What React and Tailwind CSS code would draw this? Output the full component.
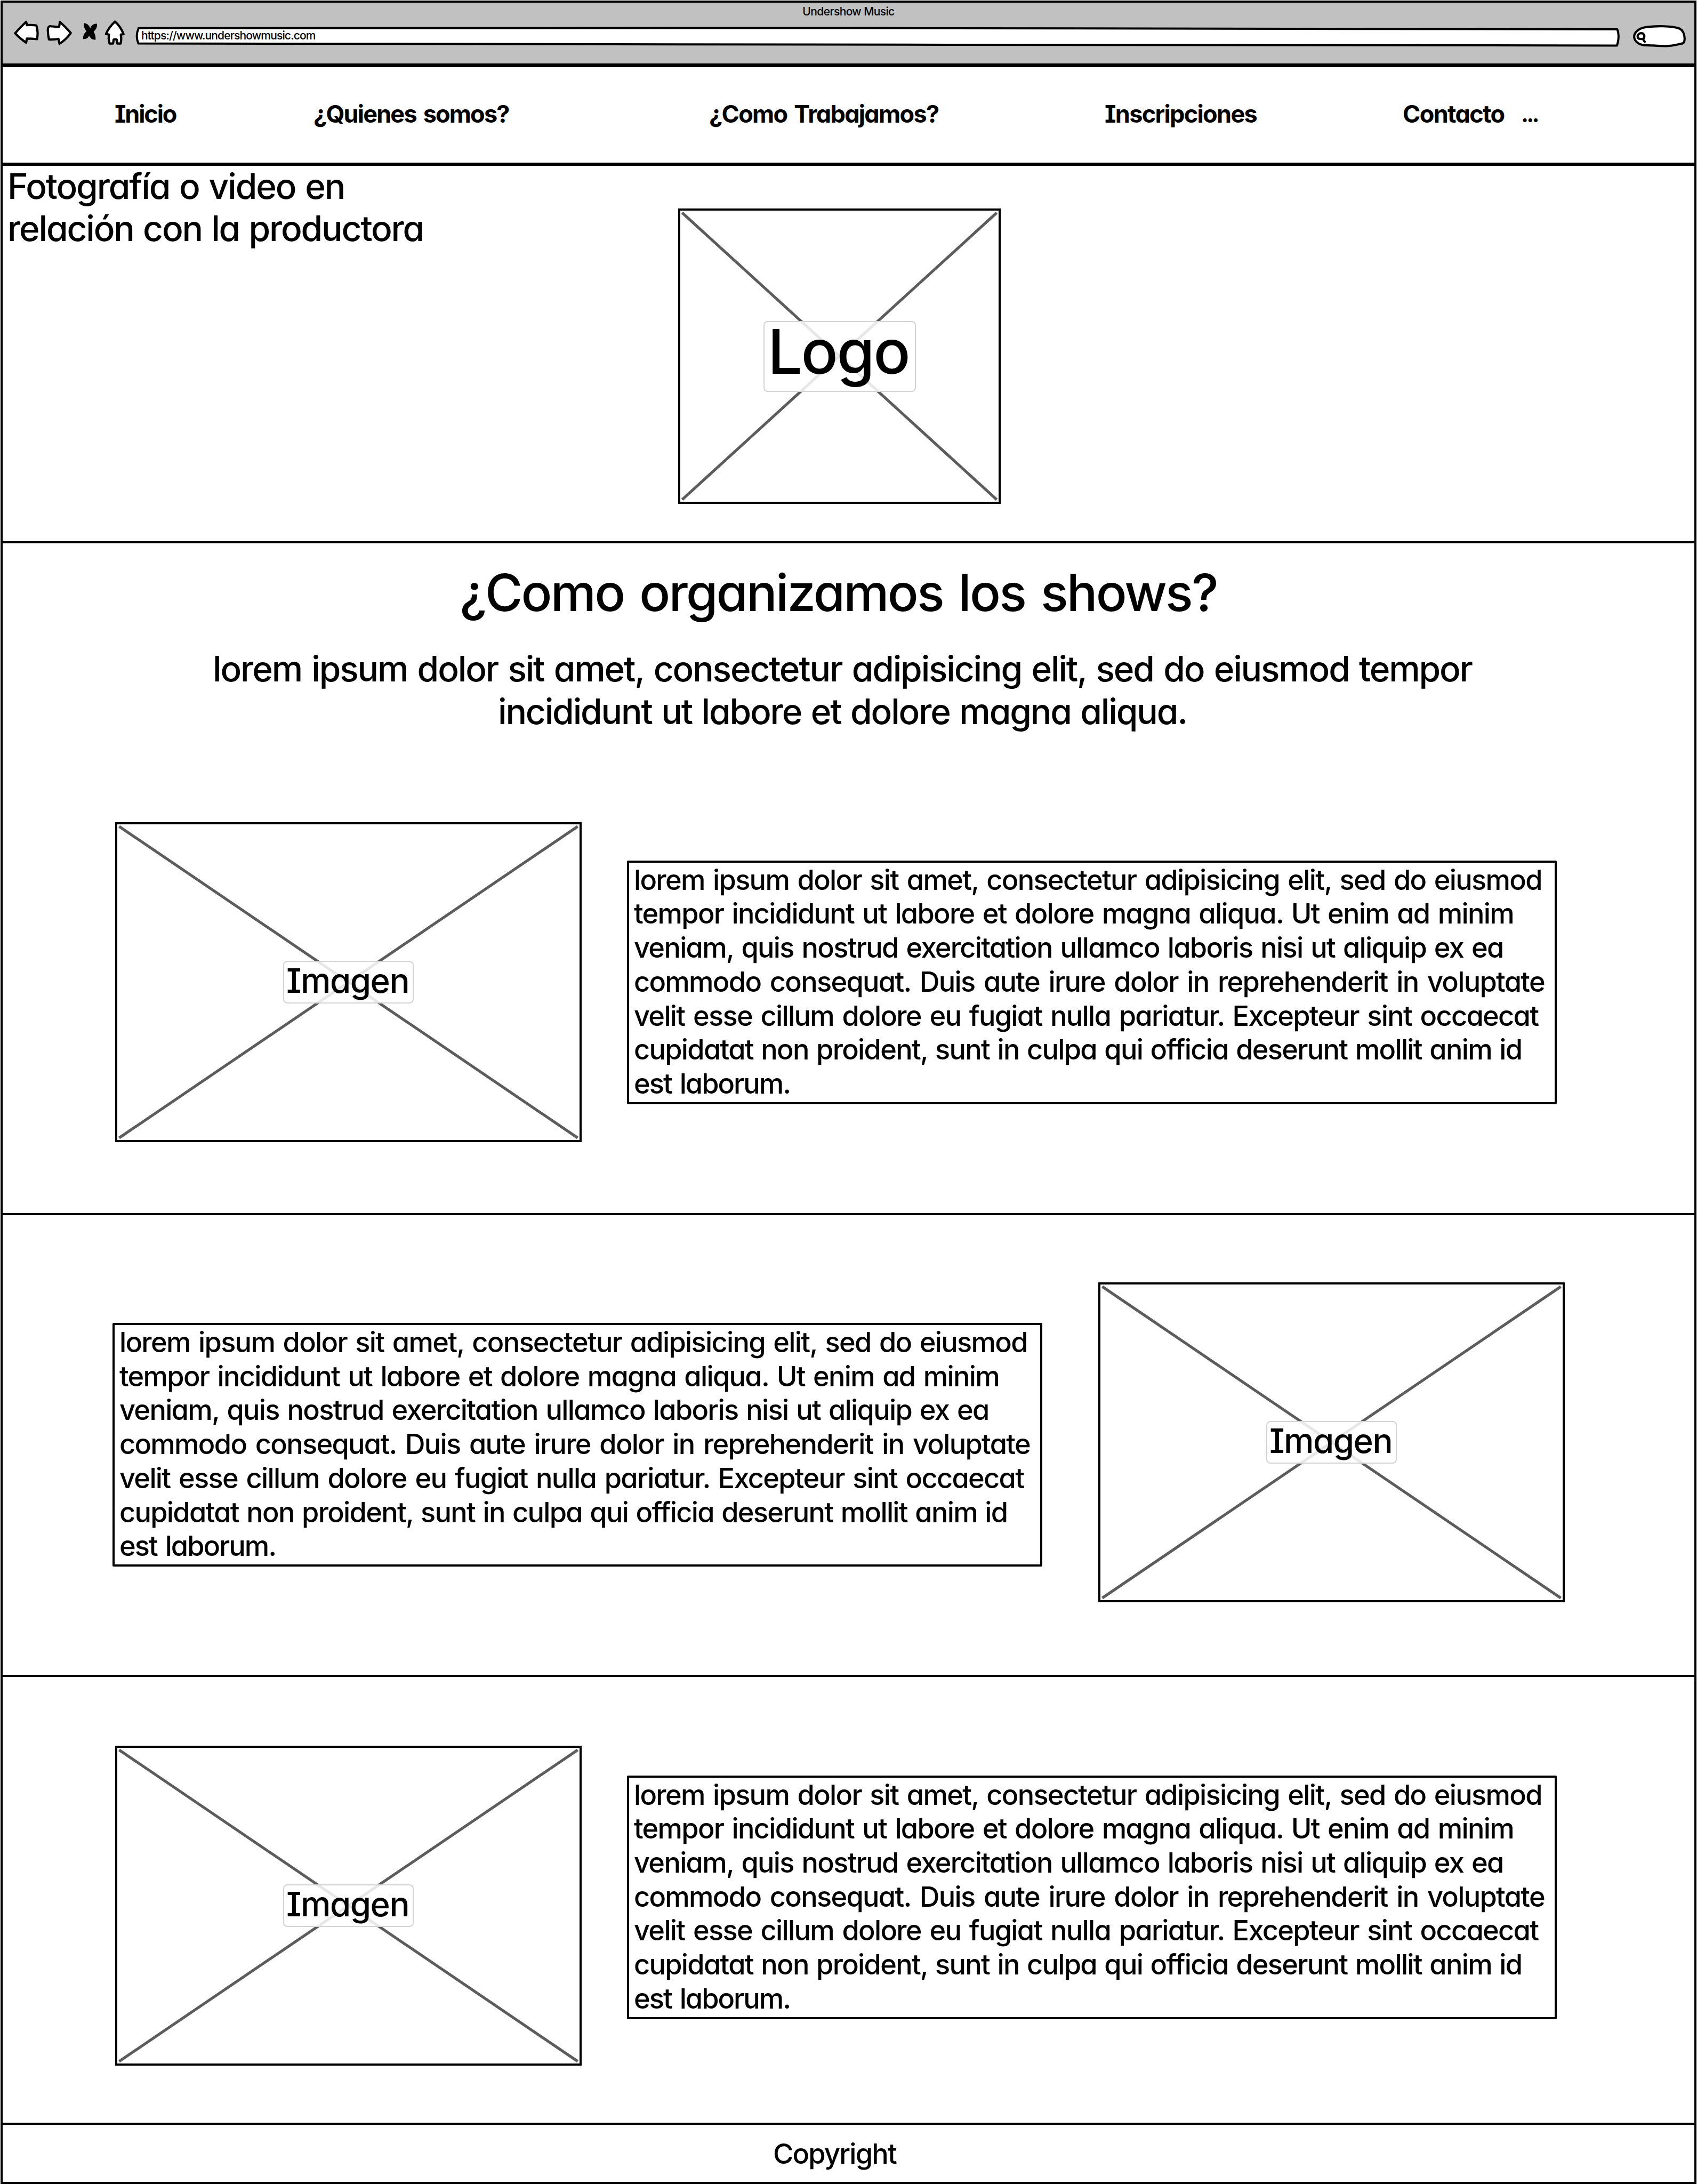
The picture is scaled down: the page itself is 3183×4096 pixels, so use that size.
const LOREM_LINES = [
  { text: 'lorem ipsum dolor sit amet, consectetur adipisicing elit, sed do eiusmod', fit: '[word-spacing:3.15px]' },
  { text: 'tempor incididunt ut labore et dolore magna aliqua. Ut enim ad minim', fit: '[word-spacing:2.95px]' },
  { text: 'veniam, quis nostrud exercitation ullamco laboris nisi ut aliquip ex ea', fit: '[word-spacing:2.57px]' },
  { text: 'commodo consequat. Duis aute irure dolor in reprehenderit in voluptate', fit: '[word-spacing:4.29px]' },
  { text: 'velit esse cillum dolore eu fugiat nulla pariatur. Excepteur sint occaecat', fit: '[word-spacing:3.3px]' },
  { text: 'cupidatat non proident, sunt in culpa qui officia deserunt mollit anim id', fit: '[word-spacing:2.1px]' },
  { text: 'est laborum.', fit: 'tracking-[-2px] [word-spacing:3px]' },
]

const NAV_ITEMS = [
  { text: 'Inicio', fit: 'tracking-[-2.1px]' },
  { text: '¿Quienes somos?', fit: 'tracking-[-1.8px] [word-spacing:4px]' },
  { text: '¿Como Trabajamos?', fit: 'tracking-[-1.67px] [word-spacing:4px]' },
  { text: 'Inscripciones', fit: 'tracking-[-1.66px]' },
  { text: 'Contacto', fit: 'tracking-[-1.63px]' },
]

function BackIcon() {
  return (
    <svg className="h-[50px] w-[50px] shrink-0" viewBox="24 36 50 50" fill="#fff" stroke="#000" strokeWidth="4.2" strokeLinejoin="round">
      <path d="M28.4 62.4 Q38 51 49 41 Q50 44 50.4 47.2 Q60 46.2 68.3 47.8 Q70.4 55 70.6 62.2 Q70.4 68 69.5 73.4 Q60 72.6 50.4 72.4 L49 80 Q37.5 72.5 28.4 62.4Z" />
    </svg>
  )
}

function ForwardIcon() {
  return (
    <svg className="ml-3 h-[50px] w-[52px] shrink-0" viewBox="86 36 52 50" fill="#fff" stroke="#000" strokeWidth="4.2" strokeLinejoin="round">
      <path d="M132.8 61.9 Q123 50.5 112.3 41 L110.9 50.8 Q99 49.8 94 49 Q89.4 49.4 89.8 58 Q90.2 67 91.8 73.8 Q101 74.6 109.6 72.8 L111.6 82 Q123 75 132.8 61.9Z" />
    </svg>
  )
}

function StopIcon() {
  return (
    <svg className="ml-3 h-[50px] w-[38px] shrink-0" viewBox="150 36 38 50" fill="#000">
      <path d="M157.2 43.2 Q165.5 43.4 169.2 53 Q173 43.4 182 44.6 Q182.8 53.4 175.6 59.6 Q179.4 65 179.4 74.4 Q171.4 75.6 167.2 67 Q163.6 74.4 155.8 73 Q155.4 64.6 162.2 58.6 Q156.2 51.6 157.2 43.2Z" />
    </svg>
  )
}

function HomeIcon() {
  return (
    <svg className="ml-1.5 h-[50px] w-[42px] shrink-0" viewBox="194 36 42 50" fill="#fff" stroke="#000" strokeWidth="4.2" strokeLinejoin="round">
      <path d="M215.6 40.4 Q226 49.5 231.8 64 L226.6 64.9 Q228.2 73 226.4 81.6 L220 81.6 L219.2 74.4 Q216 73 213 74.4 L212.2 81.6 L205.4 81.6 L203.8 72.4 L204.4 64.9 L198.8 63.7 Q203.5 52 215.6 40.4Z" />
    </svg>
  )
}

function AddressBar() {
  return (
    <div className="relative ml-[17px] h-[54px] w-[2787px] shrink-0 pt-[19px] pl-3">
      <svg className="absolute inset-0 h-[54px] w-[2787px]" viewBox="253 36 2787 54" fill="#fff" stroke="#000" strokeWidth="4" strokeLinejoin="round">
        <path d="M260 52.7 L1600 52.6 L3033.5 55 Q3038.5 68 3033 85.4 L1700 83.8 L259.5 81.6 Q253.6 67 260 52.7Z" />
      </svg>
      <span className="relative block text-[21px] leading-6 tracking-[-0.84px]">https://www.undershowmusic.com</span>
    </div>
  )
}

function SearchField() {
  return (
    <svg className="ml-5 h-[54px] w-[104px] shrink-0" viewBox="3060 36 104 54" stroke="#000" strokeLinecap="round" strokeLinejoin="round">
      <path d="M3065.1 69 C3065.3 60 3074 53 3088 50.8 C3105 48.6 3135 48 3150 53.4 C3157 57 3159.6 65 3159.8 72.4 C3159.8 77 3159 80 3156 81.4 C3146 83.6 3138 86.4 3124 86.4 C3106 86.2 3096 84.6 3084 84.8 C3072 83.6 3065.4 76 3065.1 69Z" fill="#fff" strokeWidth="4.2" />
      <path d="M3078 62.2 C3083 62.2 3085 66 3084 70 C3083.4 73.4 3080 73.4 3077 73 C3073 73 3071.2 70.6 3071.6 67.8 C3072 64.6 3075 62.4 3078 62.2Z M3082 73.6 L3085 78.4" fill="none" strokeWidth="4.2" />
    </svg>
  )
}

function BrowserBar() {
  return (
    <header className="h-[120px] border-4 border-b-2 border-black bg-[#c1c1c1] pt-[5px]">
      <p className="text-center text-[21px] leading-6 tracking-[-0.61px]">Undershow Music</p>
      <div className="mt-0.5 flex pl-[19px]">
        <BackIcon />
        <ForwardIcon />
        <StopIcon />
        <HomeIcon />
        <AddressBar />
        <SearchField />
      </div>
    </header>
  )
}

function Nav() {
  return (
    <nav className="grid h-[186px] grid-cols-[373px_742px_742px_559px_222px_auto] border-4 border-t-[5px] border-b-2 border-black pt-[58px] pl-[210px] text-[45px] leading-[60px] font-bold whitespace-nowrap">
      {NAV_ITEMS.map((item) => (
        <a key={item.text} className={item.fit}>{item.text}</a>
      ))}
      <span className="text-[42px] tracking-[-3.8px]">...</span>
    </nav>
  )
}

/* Crossed-out placeholder box with a translucent caption in its centre. */
function Placeholder({ width, height, className, labelClass, children }) {
  const w = width - 8
  const h = height - 8
  return (
    <div className={`relative flex shrink-0 items-center justify-center border-4 border-black ${className}`}>
      <svg className="absolute inset-0 h-full w-full" viewBox={`0 0 ${w} ${h}`} stroke="#5c5c5c" strokeWidth="5.2">
        <path d={`M3.5 4 L${w - 3.5} ${h - 4} M${w - 3.5} 4 L3.5 ${h - 4}`} />
      </svg>
      <span className={`relative flex items-center justify-center rounded-lg border-2 border-[#d3d3d3] bg-white/85 ${labelClass}`}>{children}</span>
    </div>
  )
}

function ImageBox() {
  return (
    <Placeholder width={875} height={600} className="h-[600px] w-[875px]" labelClass="h-20 w-[245px] pr-[3px] pb-[7px] text-[63.5px] tracking-[-1.5px]">
      Imagen
    </Placeholder>
  )
}

function TextBox({ className }) {
  return (
    <div className={`h-[457px] w-[1744px] shrink-0 rounded-[2px] border-4 border-black pt-px pl-[9px] text-[52.3px] leading-[63.7px] tracking-[-1.7px] whitespace-nowrap ${className}`}>
      {LOREM_LINES.map((line) => (
        <p key={line.text} className={line.fit}>{line.text}</p>
      ))}
    </div>
  )
}

export default function App() {
  return (
    <div className="flex h-[4096px] w-[3183px] flex-col overflow-hidden bg-white px-px pt-px font-[Inter,sans-serif] font-medium text-black [font-feature-settings:'cv11','cv08']">
      <BrowserBar />
      <Nav />

      <section className="flex h-[712px] border-4 border-black">
        <div className="-mt-px w-[1267px] shrink-0 pl-[9px] text-[65.8px] leading-[79.3px] tracking-[-2.15px] whitespace-nowrap">
          <p className="[word-spacing:2.5px]">Fotografía o video en</p>
          <p className="[word-spacing:1.9px]">relación con la productora</p>
        </div>
        <Placeholder width={605} height={554} className="mt-20 h-[554px] w-[605px]" labelClass="h-[133px] w-[286px] pr-[4px] pb-[15px] text-[115px] tracking-[-2.5px]">
          Logo
        </Placeholder>
      </section>

      <section className="h-[1260px] border-x-4 border-b-4 border-black pt-[34px]">
        <h2 className="pr-[38px] text-center text-[96px] leading-[116px] tracking-[-2.8px] [word-spacing:6px]">¿Como organizamos los shows?</h2>
        <div className="mt-[46px] pr-[23px] text-center text-[65.8px] leading-[79.6px] tracking-[-2.15px]">
          <p className="[word-spacing:2.97px]">lorem ipsum dolor sit amet, consectetur adipisicing elit, sed do eiusmod tempor</p>
          <p className="[word-spacing:2.2px]">incididunt ut labore et dolore magna aliqua.</p>
        </div>
        <div className="mt-[168px] flex items-center gap-[85px] pl-[211px]">
          <ImageBox />
          <TextBox className="" />
        </div>
      </section>

      <section className="h-[866px] border-x-4 border-b-4 border-black pt-[126px]">
        <div className="flex items-center gap-[105px] pl-[206px]">
          <TextBox className="mt-[9px]" />
          <ImageBox />
        </div>
      </section>

      <section className="h-[840px] border-x-4 border-b-4 border-black pt-[129px]">
        <div className="flex items-center gap-[85px] pl-[211px]">
          <ImageBox />
          <TextBox className="mb-8" />
        </div>
      </section>

      <footer className="h-[111px] border-x-4 border-b-4 border-black pt-[22px] pr-[52px] text-center text-[52.3px] leading-[64px] tracking-[-1.79px]">
        Copyright
      </footer>
    </div>
  )
}
